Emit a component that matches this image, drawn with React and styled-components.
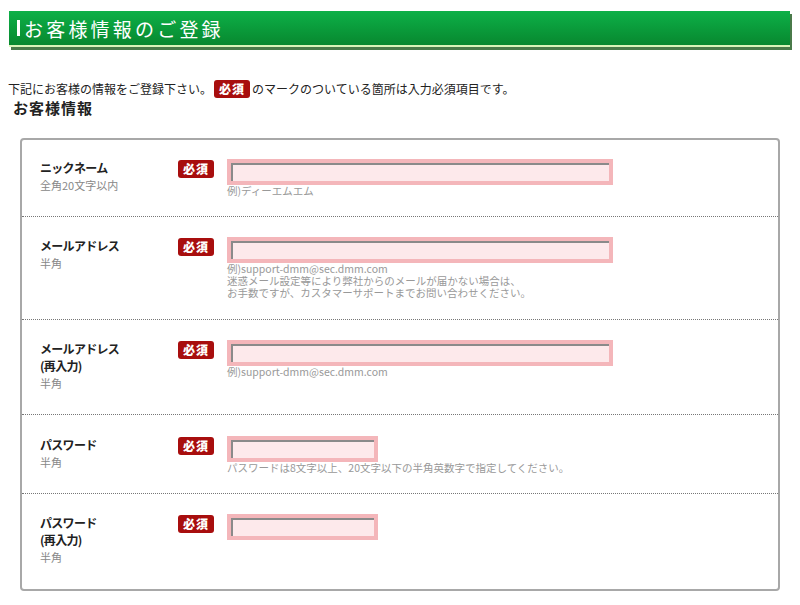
import React from "react";
import styled, { createGlobalStyle } from "styled-components";

const Global = createGlobalStyle`
  html, body { margin: 0; padding: 0; background: #fff; }
  body { font-family: "Noto Sans CJK JP", "Noto Sans", sans-serif; color: #222; }
`;

const Page = styled.div`
  width: 800px;
  padding-top: 11px;
  box-sizing: border-box;
`;

const Header = styled.div`
  margin-left: 9px;
  width: 773px;
  height: 34px;
  background: linear-gradient(#0db048, #0a9a3a 55%, #08882f);
  border-bottom: 2px solid #d8f5b8;
  box-shadow: 2px 3px 0 #4a7a4a;
  display: flex;
  align-items: center;
  padding-left: 8px;
  box-sizing: content-box;
`;

const HeaderTitle = styled.h1`
  margin: 0;
  font-size: 19px;
  font-weight: 400;
  color: #fff;
  letter-spacing: 3.2px;
  line-height: 1;
  display: flex;
  align-items: center;
  gap: 4px;
`;

const Bar = styled.span`
  display: inline-block;
  width: 3px;
  height: 16px;
  background: #fff;
`;

const Intro = styled.p`
  margin: 33px 0 0 8px;
  font-size: 12px;
  line-height: 18px;
  display: flex;
  align-items: center;
  gap: 2px;
`;

const Badge = styled.span`
  display: inline-flex;
  align-items: center;
  justify-content: center;
  width: 36px;
  height: 18px;
  border-radius: 3px;
  background: #a80e0e;
  color: #fff;
  font-size: 12px;
  font-weight: 900;
  letter-spacing: 1px;
  line-height: 1;
  flex-shrink: 0;
`;

const SectionTitle = styled.h2`
  margin: 1px 0 0 13px;
  font-size: 15px;
  font-weight: 700;
  letter-spacing: 1px;
  line-height: 18px;
  color: #222;
`;

const Card = styled.div`
  margin: 21px 0 0 20px;
  width: 760px;
  border: 2px solid #a8a8a8;
  border-radius: 4px;
  box-sizing: border-box;
`;

const Row = styled.div`
  display: grid;
  grid-template-columns: 138px 49px 1fr;
  padding: ${p => p.$pt}px 18px 0 18px;
  height: ${p => p.$h}px;
  box-sizing: border-box;
  border-top: ${p => (p.$first ? "none" : "1px dotted #777")};
`;

const LabelCol = styled.div`
  display: flex;
  flex-direction: column;
`;

const Label = styled.div`
  font-size: 12px;
  font-weight: 700;
  letter-spacing: -0.7px;
  line-height: 17px;
  color: #222;
`;

const SubLabel = styled.div`
  font-size: 11px;
  color: #888;
  line-height: 18px;
`;

const BadgeCol = styled.div`
  display: flex;
  align-items: flex-start;
  padding-top: 1px;
`;

const FieldCol = styled.div`
  display: flex;
  flex-direction: column;
  align-items: flex-start;
`;

const Input = styled.input`
  width: ${p => p.$w}px;
  height: 26px;
  box-sizing: border-box;
  border: 4px solid #f4b6ba;
  background: #fde9eb;
  box-shadow: inset 2px 2px 0 #8a8a8a;
  outline: none;
  padding: 0;
  margin: 0;
`;

const Hint = styled.div`
  font-size: 10.5px;
  line-height: 12px;
  color: #999;
`;

const rows = [
  { label: ["ニックネーム"], sub: "全角20文字以内", w: 386, hint: ["例)ディーエムエム"], h: 76, pt: 19 },
  {
    label: ["メールアドレス"],
    sub: "半角",
    w: 386,
    hint: [
      "例)support-dmm@sec.dmm.com",
      "迷惑メール設定等により弊社からのメールが届かない場合は、",
      "お手数ですが、カスタマーサポートまでお問い合わせください。",
    ],
    h: 103,
    pt: 20,
  },
  { label: ["メールアドレス", "(再入力)"], sub: "半角", w: 386, hint: ["例)support-dmm@sec.dmm.com"], h: 95, pt: 20 },
  {
    label: ["パスワード"],
    sub: "半角",
    w: 151,
    hint: ["パスワードは8文字以上、20文字以下の半角英数字で指定してください。"],
    h: 79,
    pt: 21,
  },
  { label: ["パスワード", "(再入力)"], sub: "半角", w: 151, hint: [], h: 96, pt: 20 },
];

export default function App() {
  return (
    <Page>
      <Global />
      <Header>
        <HeaderTitle>
          <Bar />
          お客様情報のご登録
        </HeaderTitle>
      </Header>
      <Intro>
        下記にお客様の情報をご登録下さい。<Badge>必須</Badge>のマークのついている箇所は入力必須項目です。
      </Intro>
      <SectionTitle>お客様情報</SectionTitle>
      <Card>
        {rows.map((r, i) => (
          <Row key={i} $first={i === 0} $h={r.h} $pt={r.pt}>
            <LabelCol>
              {r.label.map(l => (
                <Label key={l}>{l}</Label>
              ))}
              <SubLabel>{r.sub}</SubLabel>
            </LabelCol>
            <BadgeCol>
              <Badge>必須</Badge>
            </BadgeCol>
            <FieldCol>
              <Input $w={r.w} type={i >= 3 ? "password" : "text"} />
              {r.hint.length > 0 && (
                <Hint>
                  {r.hint.map(h => (
                    <div key={h}>{h}</div>
                  ))}
                </Hint>
              )}
            </FieldCol>
          </Row>
        ))}
      </Card>
    </Page>
  );
}
